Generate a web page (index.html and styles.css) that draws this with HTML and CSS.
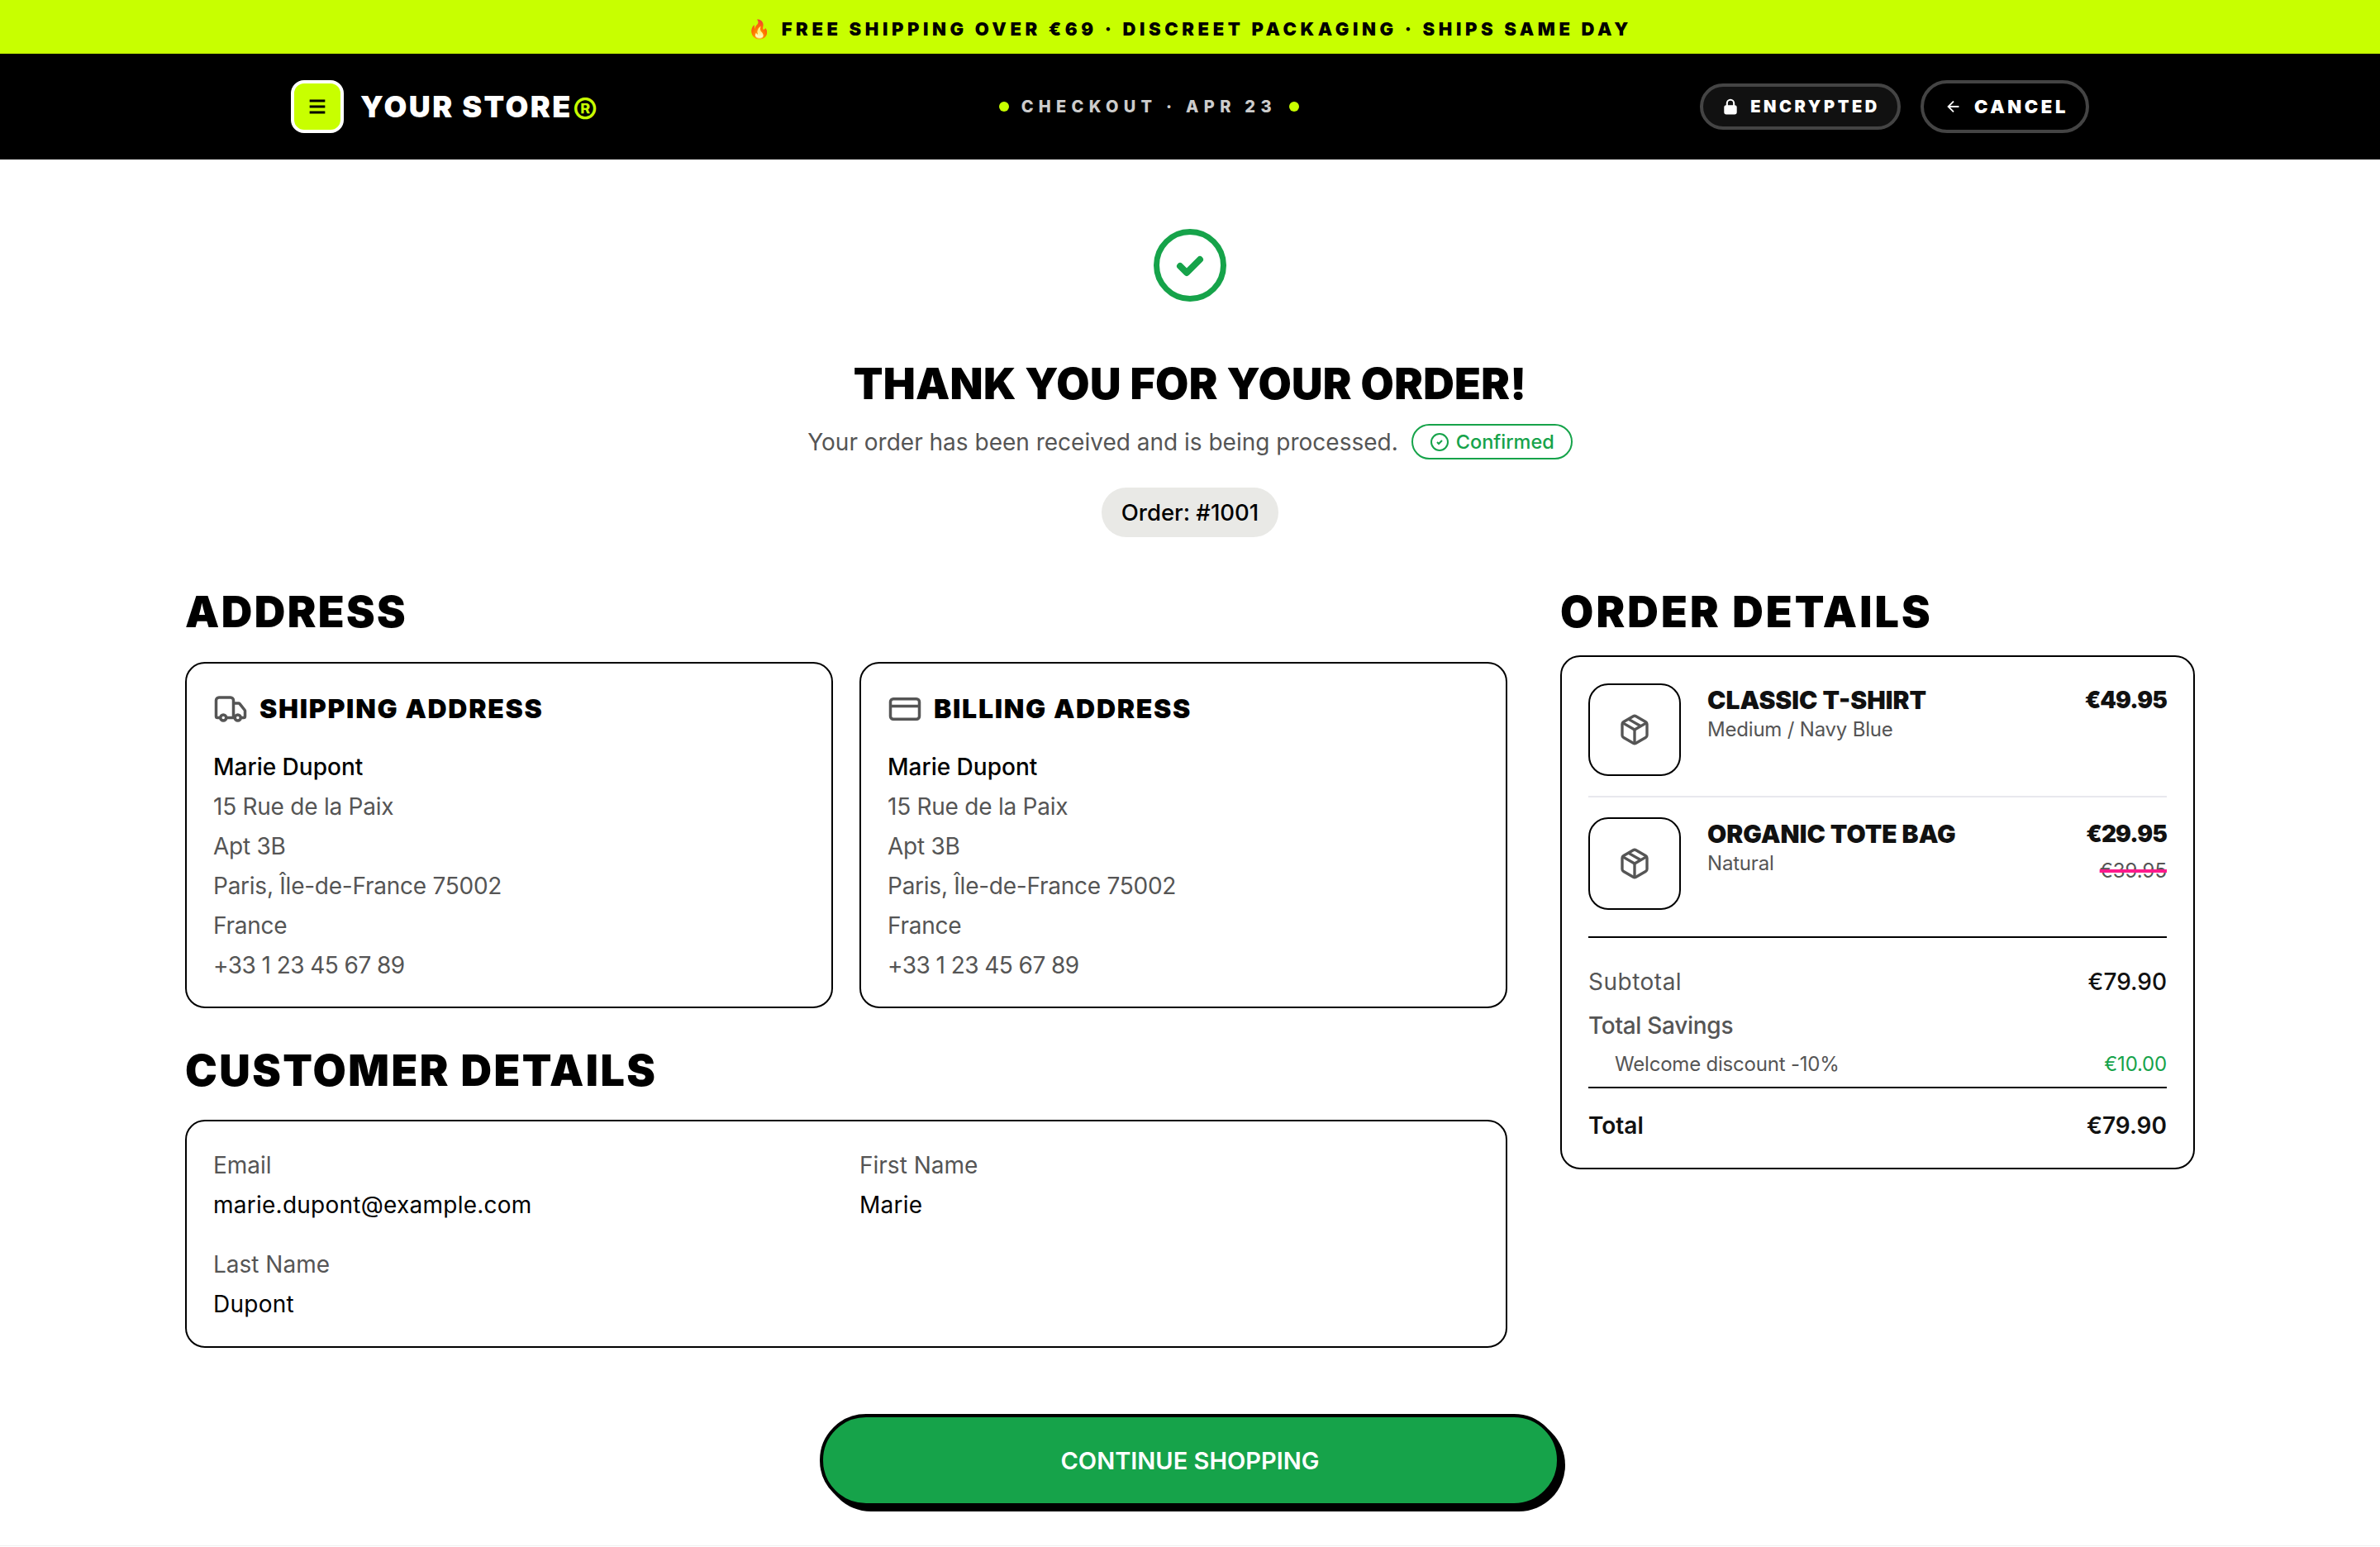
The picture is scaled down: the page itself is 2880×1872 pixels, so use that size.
FILE: index.html
```html
<!DOCTYPE html>
<html lang="en">
<head>
    <meta charset="UTF-8">
    <meta name="viewport" content="width=device-width, initial-scale=1.0">
    <title>Order confirmed</title>
    <link rel="stylesheet" href="styles.css">
</head>
<body>
    <div class="promo"><span class="promo-text">🔥 FREE SHIPPING OVER €69 · DISCREET PACKAGING · SHIPS SAME DAY</span></div>
    <header class="nav">
        <div class="nav-inner">
            <div class="brand">
                <span class="brand-mark">
                    <svg class="icon-menu" viewBox="0 0 24 24"><path d="M4 6h16M4 12h16M4 18h16"/></svg>
                </span>
                <span class="brand-name">YOUR STORE<span class="brand-reg">®</span></span>
            </div>
            <div class="step"><i class="dot"></i><span class="step-text">CHECKOUT · APR 23</span><i class="dot"></i></div>
            <div class="nav-actions">
                <span class="pill-encrypted">
                    <svg class="icon-lock" viewBox="0 0 24 24"><rect x="4" y="11" width="16" height="11" rx="2"/><path d="M7 11V7a5 5 0 0 1 10 0v4"/></svg>
                    ENCRYPTED
                </span>
                <span class="pill-cancel">
                    <svg class="icon-arrow" viewBox="0 0 24 24"><path d="m12 19-7-7 7-7M19 12H5"/></svg>
                    CANCEL
                </span>
            </div>
        </div>
    </header>

    <main class="page">
        <section class="hero">
            <svg class="hero-check" viewBox="0 0 88 88"><circle cx="44" cy="44" r="40.5"/><path d="m32 45 8 8 16-16"/></svg>
            <h1>THANK YOU FOR YOUR ORDER!</h1>
            <div class="hero-sub">
                <span>Your order has been received and is being processed.</span>
                <span class="badge-ok">
                    <svg viewBox="0 0 24 24"><circle cx="12" cy="12" r="10"/><path d="m9 12 2 2 4-4"/></svg>
                    Confirmed
                </span>
            </div>
            <div class="order-no">Order: #1001</div>
        </section>

        <div class="columns">
            <div class="col-left">
                <h2 class="addr-heading">ADDRESS</h2>
                <div class="addr-grid">
                    <div class="card addr-card">
                        <h3>
                            <svg viewBox="0 0 24 24"><path d="M14 18V6a2 2 0 0 0-2-2H4a2 2 0 0 0-2 2v11a1 1 0 0 0 1 1h2"/><path d="M15 18H9"/><path d="M19 18h2a1 1 0 0 0 1-1v-3.65a1 1 0 0 0-.22-.624l-3.48-4.35A1 1 0 0 0 17.52 8H14"/><circle cx="17" cy="18" r="2"/><circle cx="7" cy="18" r="2"/></svg>
                            SHIPPING ADDRESS
                        </h3>
                        <p class="name">Marie Dupont</p>
                        <p>15 Rue de la Paix</p>
                        <p>Apt 3B</p>
                        <p>Paris, Île-de-France 75002</p>
                        <p>France</p>
                        <p class="phone">+33 1 23 45 67 89</p>
                    </div>
                    <div class="card addr-card">
                        <h3>
                            <svg viewBox="0 0 24 24"><rect x="2" y="5" width="20" height="14" rx="2"/><path d="M2 10h20"/></svg>
                            BILLING ADDRESS
                        </h3>
                        <p class="name">Marie Dupont</p>
                        <p>15 Rue de la Paix</p>
                        <p>Apt 3B</p>
                        <p>Paris, Île-de-France 75002</p>
                        <p>France</p>
                        <p class="phone">+33 1 23 45 67 89</p>
                    </div>
                </div>

                <h2 class="cust-heading">CUSTOMER DETAILS</h2>
                <div class="card cust-grid">
                    <div><p>Email</p><p class="value">marie.dupont@example.com</p></div>
                    <div><p>First Name</p><p class="value">Marie</p></div>
                    <div><p>Last Name</p><p class="value">Dupont</p></div>
                </div>
            </div>

            <div class="col-right">
                <h2 class="order-heading">ORDER DETAILS</h2>
                <div class="order-card">
                    <div class="item item-first">
                        <div class="thumb">
                            <svg viewBox="0 0 24 24"><path d="m7.5 4.27 9 5.15"/><path d="M21 8a2 2 0 0 0-1-1.73l-7-4a2 2 0 0 0-2 0l-7 4A2 2 0 0 0 3 8v8a2 2 0 0 0 1 1.73l7 4a2 2 0 0 0 2 0l7-4A2 2 0 0 0 21 16Z"/><path d="m3.3 7 8.7 5 8.7-5"/><path d="M12 22V12"/></svg>
                        </div>
                        <div class="item-info">
                            <div class="item-name">CLASSIC T-SHIRT</div>
                            <div class="item-var">Medium / Navy Blue</div>
                        </div>
                        <div class="item-price">
                            <div class="price">€49.95</div>
                        </div>
                    </div>
                    <div class="item">
                        <div class="thumb">
                            <svg viewBox="0 0 24 24"><path d="m7.5 4.27 9 5.15"/><path d="M21 8a2 2 0 0 0-1-1.73l-7-4a2 2 0 0 0-2 0l-7 4A2 2 0 0 0 3 8v8a2 2 0 0 0 1 1.73l7 4a2 2 0 0 0 2 0l7-4A2 2 0 0 0 21 16Z"/><path d="m3.3 7 8.7 5 8.7-5"/><path d="M12 22V12"/></svg>
                        </div>
                        <div class="item-info">
                            <div class="item-name">ORGANIC TOTE BAG</div>
                            <div class="item-var">Natural</div>
                        </div>
                        <div class="item-price">
                            <div class="price">€29.95</div>
                            <div class="price-old">€39.95</div>
                        </div>
                    </div>
                    <div class="summary">
                        <div class="row row-sub"><span>Subtotal</span><span class="val">€79.90</span></div>
                        <div class="row row-save"><span>Total Savings</span></div>
                        <div class="row row-disc"><span>Welcome discount -10%</span><span class="val-green">€10.00</span></div>
                    </div>
                    <div class="row row-total"><span>Total</span><span>€79.90</span></div>
                </div>
            </div>
        </div>

        <div class="cta-wrap"><a class="cta">CONTINUE SHOPPING</a></div>
    </main>
    <footer class="foot"></footer>
</body>
</html>
```

FILE: styles.css
```css
* {
    box-sizing: border-box;
}
body {
    margin: 0;
    background: #fff;
    color: #000;
    font-family: "Inter", "Liberation Sans", sans-serif;
}
h1, h2, h3, p {
    margin: 0;
}

/* top bars */
.promo {
    height: 65px;
    padding-top: 4px;
    background: #c8ff00;
    display: flex;
    align-items: center;
    justify-content: center;
}
.promo-text {
    font-size: 22px;
    font-weight: 900;
    letter-spacing: 4.6px;
}
.nav {
    height: 128px;
    background: #000;
    display: flex;
    align-items: center;
    justify-content: center;
}
.nav-inner {
    width: 2176px;
    display: flex;
    align-items: center;
    justify-content: space-between;
}
.brand {
    display: flex;
    align-items: center;
    gap: 20px;
}
.brand-mark {
    width: 64px;
    height: 64px;
    background: #c8ff00;
    border: 4px solid #fff;
    border-radius: 16px;
    display: flex;
    align-items: center;
    justify-content: center;
}
.icon-menu {
    width: 28px;
    height: 28px;
    fill: none;
    stroke: #000;
    stroke-width: 2.4;
}
.brand-name {
    display: flex;
    align-items: center;
    height: 64px;
    color: #fff;
    font-size: 36px;
    font-weight: 900;
    letter-spacing: 2.4px;
}
.brand-reg {
    color: #c8ff00;
    font-size: 46px;
    font-weight: 600;
    letter-spacing: 0;
    line-height: 1;
    padding-top: 11px;
}
.step {
    display: flex;
    align-items: center;
    gap: 15px;
}
.step-text {
    color: #ccc;
    font-size: 20px;
    font-weight: 800;
    letter-spacing: 6.3px;
}
.dot {
    width: 12px;
    height: 12px;
    border-radius: 50%;
    background: #c8ff00;
}
.nav-actions {
    display: flex;
    align-items: center;
    gap: 24px;
}
.pill-encrypted, .pill-cancel {
    display: flex;
    align-items: center;
    color: #fff;
    font-weight: 900;
    border-style: solid;
    border-color: #444;
    border-radius: 999px;
}
.pill-encrypted {
    height: 56px;
    padding: 0 21px 0 23px;
    gap: 14px;
    font-size: 20px;
    letter-spacing: 3.6px;
    background: #111;
    border-width: 4px;
}
.pill-cancel {
    height: 64px;
    padding: 0 21px 0 25px;
    gap: 14px;
    font-size: 22px;
    letter-spacing: 3.6px;
    border-width: 4px;
}
.icon-lock {
    width: 20px;
    height: 24px;
    fill: none;
    stroke: #fff;
    stroke-width: 2.5;
}
.icon-lock rect {
    fill: #fff;
}
.icon-arrow {
    width: 22px;
    height: 22px;
    fill: none;
    stroke: #fff;
    stroke-width: 2;
}

/* hero */
.page {
    width: 2432px;
    margin: 0 auto;
}
.hero {
    display: flex;
    flex-direction: column;
    align-items: center;
    padding-top: 84px;
}
.hero-check {
    width: 88px;
    height: 88px;
    fill: none;
    stroke: #16a34a;
    stroke-width: 7;
}
.hero-check path {
    stroke-width: 8;
    stroke-linecap: round;
    stroke-linejoin: round;
}
h1 {
    margin-top: 66px;
    font-size: 52px;
    line-height: 68px;
    font-weight: 900;
    letter-spacing: 0.3px;
}
.hero-sub {
    display: flex;
    align-items: center;
    gap: 16px;
    margin-top: 14px;
    font-size: 28px;
    color: #555;
}
.badge-ok {
    display: flex;
    align-items: center;
    gap: 8px;
    height: 43px;
    padding: 0 20px;
    border: 2px solid #16a34a;
    border-radius: 999px;
    color: #16a34a;
    font-size: 23.5px;
    font-weight: 500;
}
.badge-ok svg {
    width: 24px;
    height: 24px;
    fill: none;
    stroke: #16a34a;
    stroke-width: 2;
}
.order-no {
    margin-top: 34px;
    height: 60px;
    padding: 0 24px;
    display: flex;
    align-items: center;
    background: #e9e9e6;
    border-radius: 999px;
    font-size: 27.5px;
    font-weight: 500;
}

/* columns */
.columns {
    display: grid;
    grid-template-columns: 1600px 768px;
    gap: 64px;
    margin-top: 59px;
}
h2 {
    height: 62px;
    padding-top: 2px;
    font-size: 52px;
    line-height: 60px;
    font-weight: 900;
    letter-spacing: 2.4px;
}
.addr-heading {
    margin-bottom: 30px;
}
.order-heading {
    margin-bottom: 22px;
    letter-spacing: 3.1px;
}
.cust-heading {
    margin: 44px 0 29px;
}
.addr-grid {
    display: grid;
    grid-template-columns: 1fr 1fr;
    gap: 32px;
}
.card {
    border: 2px solid #000;
    border-radius: 24px;
    padding: 28px 32px;
    font-size: 28px;
    line-height: 48px;
    color: #555;
}
.addr-card {
    padding-bottom: 26px;
}
.addr-card p {
    letter-spacing: -0.25px;
}
.addr-card .phone {
    letter-spacing: -0.55px;
}
.addr-card .name {
    color: #000;
    font-weight: 500;
    letter-spacing: 0;
}
.card h3 {
    display: flex;
    align-items: center;
    gap: 14px;
    height: 54px;
    margin-bottom: 19px;
    color: #000;
    font-size: 32px;
    font-weight: 900;
    letter-spacing: 1.7px;
}
.card h3 svg {
    width: 42px;
    height: 42px;
    fill: none;
    stroke: #555;
    stroke-width: 2;
}
.value {
    color: #000;
    letter-spacing: 0.25px;
}
.cust-grid {
    display: grid;
    grid-template-columns: 1fr 1fr;
    gap: 24px 32px;
    padding-top: 29px;
    padding-bottom: 27px;
}

/* order card */
.order-card {
    border: 2px solid #000;
    border-radius: 24px;
    padding: 32px;
    height: 622px;
}
.item {
    display: flex;
    gap: 32px;
}
.item-first {
    padding-bottom: 24px;
    margin-bottom: 24px;
    border-bottom: 2px solid #e8e8ee;
}
.thumb {
    width: 112px;
    height: 112px;
    flex: none;
    border: 2px solid #000;
    border-radius: 24px;
    display: flex;
    align-items: center;
    justify-content: center;
}
.thumb svg {
    width: 40px;
    height: 40px;
    fill: none;
    stroke: #555;
    stroke-width: 2;
}
.item-info {
    flex: 1;
}
.item-name {
    font-size: 30px;
    line-height: 40px;
    font-weight: 900;
    color: #111;
}
.price {
    font-size: 28px;
    line-height: 40px;
    font-weight: 900;
    letter-spacing: -0.9px;
    color: #111;
}
.item-var {
    font-size: 24px;
    line-height: 32px;
    letter-spacing: -0.2px;
    color: #555;
}
.item-price {
    text-align: right;
}
.price-old {
    margin-top: 9px;
    font-size: 24px;
    line-height: 32px;
    color: #555;
    text-decoration: line-through;
    text-decoration-color: #ff1a8c;
    text-decoration-thickness: 4px;
}
.summary {
    margin-top: 32px;
    padding-top: 29px;
    padding-bottom: 5px;
    border-top: 2px solid #000;
    border-bottom: 2px solid #000;
}
.row {
    display: flex;
    justify-content: space-between;
    font-size: 28px;
}
.row-sub {
    line-height: 48px;
    color: #555;
    margin-bottom: 5px;
    letter-spacing: 0.5px;
}
.val {
    color: #111;
    font-weight: 500;
    letter-spacing: 0;
}
.row-save {
    line-height: 48px;
    margin-bottom: 1px;
    color: #555;
    font-weight: 500;
    letter-spacing: -0.3px;
}
.row-disc {
    line-height: 44px;
    padding-left: 32px;
    font-size: 24px;
    letter-spacing: -0.2px;
    color: #555;
}
.val-green {
    color: #16a34a;
}
.row-total {
    margin-top: 21px;
    line-height: 48px;
    color: #111;
    font-weight: 600;
}

/* button */
.cta-wrap {
    display: flex;
    justify-content: center;
    margin-top: 80px;
}
.cta {
    width: 896px;
    height: 112px;
    display: flex;
    align-items: center;
    justify-content: center;
    background: #16a34a;
    border: 4px solid #000;
    border-radius: 999px;
    box-shadow: 6px 6px 0 #000;
    color: #fff;
    font-size: 29px;
    font-weight: 600;
}
.foot {
    height: 1px;
    margin-top: 47px;
    background: #f0f0f0;
}
```
